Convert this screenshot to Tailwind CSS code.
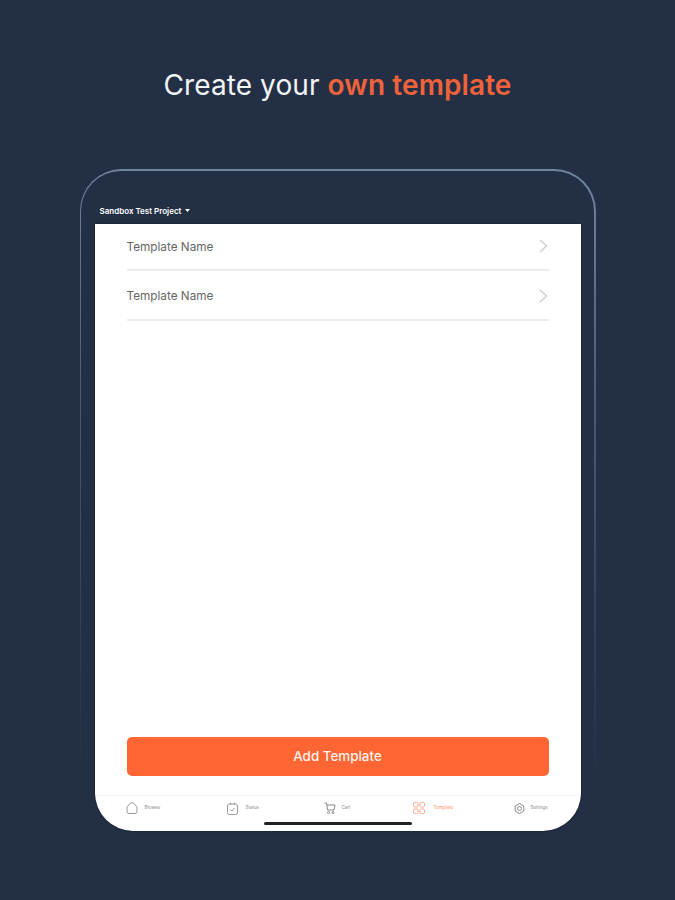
<!doctype html>
<html lang="en">
<head>
    <meta charset="UTF-8">
    <meta name="viewport" content="width=device-width, initial-scale=1.0">
    <title>Create your own template</title>
    <script src="https://cdn.jsdelivr.net/npm/@tailwindcss/browser@4"></script>
</head>
<body class="bg-[#232f45] font-['Inter',sans-serif]">
    <div class="w-[675px] h-[900px] overflow-hidden flex flex-col items-center">
        <h1 class="mt-[67px] h-[37px] text-[28px] leading-[37px] text-[#f1f3f5] tracking-[0.1px]">Create your <span class="font-semibold text-[#f0623a]">own template</span></h1>

        <!-- tablet frame, its edge fades out towards the bottom -->
        <div class="mt-[65px] w-[516px] h-[663px] rounded-[42px] p-[1.5px] bg-gradient-to-b from-[#71859c] via-[#4a5c75] via-35% to-[#232f45] to-92%">
            <div class="w-full h-full rounded-[40px] bg-[#232f45] px-[13.5px] flex flex-col">
                <div class="h-[53.5px] pt-[27px] pl-[5px] flex items-center gap-[4px] text-white">
                    <span class="text-[8px] leading-[12px] font-semibold">Sandbox Test Project</span>
                    <svg width="5" height="3" viewBox="0 0 5 3"><path d="M0 0h5L2.500 3z" fill="#fff"/></svg>
                </div>

                <div class="flex-1 bg-white rounded-b-[38px] overflow-hidden flex flex-col shadow-[0_0_2px_#0b1220]">
                    <div class="px-[32px] flex-1 flex flex-col">
                        <div class="h-[47px] flex items-center justify-between border-b-2 border-[#ececec] pb-[2px]">
                            <span class="mt-[4px] text-[11.750px] text-[#666666]">Template Name</span>
                            <svg class="mr-[1px]" width="9" height="14" viewBox="0 0 9 14" fill="none" stroke="#cfcfcf" stroke-width="1.400"><path d="M1 1l6.500 6L1 13"/></svg>
                        </div>
                        <div class="mt-[2px] h-[48px] flex items-center justify-between border-b-2 border-[#ececec] pb-[2px]">
                            <span class="mt-[4px] text-[11.750px] text-[#666666]">Template Name</span>
                            <svg class="mr-[1px] mt-[2px]" width="9" height="14" viewBox="0 0 9 14" fill="none" stroke="#cfcfcf" stroke-width="1.400"><path d="M1 1l6.500 6L1 13"/></svg>
                        </div>
                        <button class="mt-auto mb-[19px] h-[39px] w-full rounded-[5px] bg-[#ff6633] text-[#fff3ee] text-[13.400px] font-medium">Add Template</button>
                    </div>

                    <!-- bottom tabs -->
                    <div class="relative h-[36px] border-t border-[#f3f3f3] grid grid-cols-[101px_97px_89px_101px_1fr] pl-[31px] pt-[5px] text-[4.500px] text-[#888888]">
                        <div class="flex items-center gap-[7px] h-[15px]">
                            <svg width="12" height="12" viewBox="0 0 12 12" fill="none" stroke="#999999"><path d="M1 5l3-3.500Q6 0 8 1.500L11 5v4.500a2 2 0 0 1-2 2H3a2 2 0 0 1-2-2z"/></svg>
                            <span>Browse</span>
                        </div>
                        <div class="flex items-center gap-[8px] h-[15px]">
                            <svg width="11" height="13" viewBox="0 0 11 13" fill="none" stroke="#999999"><rect x="0.500" y="2" width="10" height="10.500" rx="2"/><path d="M3.500 0.500v2M7.500 0.500v2M3.500 7.500l1.500 1.500 2.500-3"/></svg>
                            <span>Status</span>
                        </div>
                        <div class="flex items-center gap-[6px] h-[15px]">
                            <svg width="12" height="12" viewBox="0 0 12 12" fill="none" stroke="#888888"><path d="M0.500 1h2l1 7h6.500l1-5H3"/><circle cx="4.500" cy="10.500" r="1"/><circle cx="9" cy="10.500" r="1"/></svg>
                            <span>Cart</span>
                        </div>
                        <div class="flex items-center gap-[9px] h-[15px] text-[#ff8a6a]">
                            <svg width="12" height="12" viewBox="0 0 12 12" fill="none" stroke="#ffa58c"><rect x="0.500" y="0.500" width="4.500" height="4.500" rx="1.200"/><rect x="7" y="0.500" width="4.500" height="4.500" rx="1.200"/><rect x="0.500" y="7" width="4.500" height="4.500" rx="1.200"/><rect x="7" y="7" width="4.500" height="4.500" rx="1.200"/></svg>
                            <span>Template</span>
                        </div>
                        <div class="flex items-center gap-[6px] h-[15px]">
                            <svg width="11" height="11" viewBox="0 0 11 11" fill="none" stroke="#888888"><path d="M5.500 0.500l4.300 2.500v5L5.500 10.500 1.200 8V3z"/><circle cx="5.500" cy="5.500" r="2"/></svg>
                            <span>Settings</span>
                        </div>
                        <div class="absolute left-[169px] bottom-[5.500px] w-[148px] h-[3px] rounded-full bg-[#222222]"></div>
                    </div>
                </div>
            </div>
        </div>
    </div>
</body>
</html>
